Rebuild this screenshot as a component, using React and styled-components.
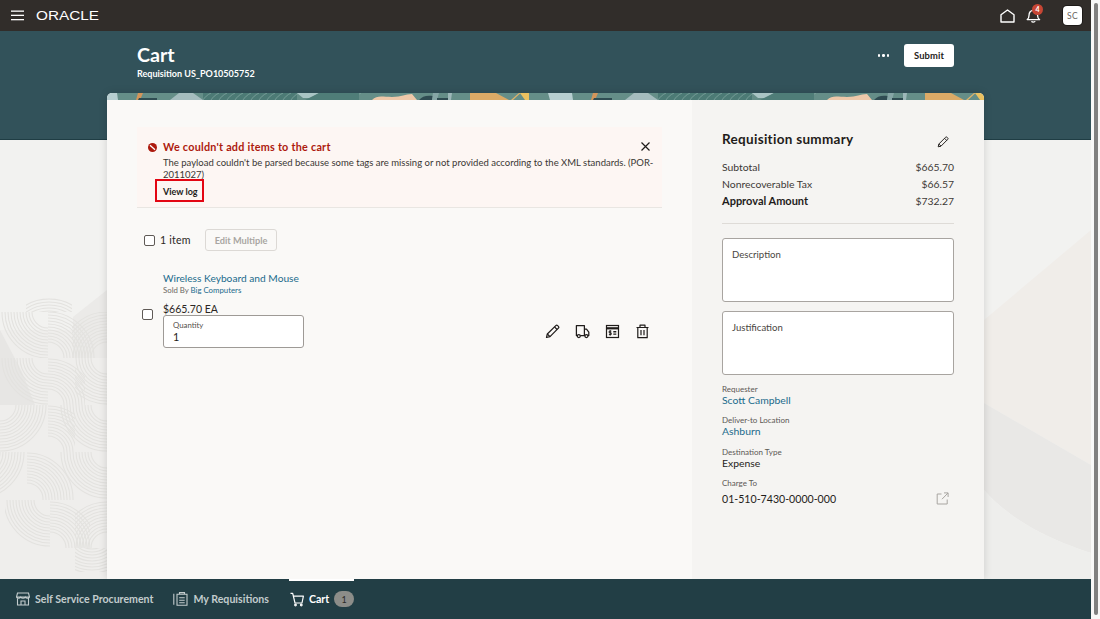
import React from "react";
import styled, { createGlobalStyle } from "styled-components";

const FONT = `Lato, "Noto Sans", sans-serif`;
const LINK = "#1b6b8c";

const Global = createGlobalStyle`
  html, body { margin: 0; padding: 0; height: 100%; overflow: hidden; background: #f2f2f0; }
  body { font-family: ${FONT}; color: #1f1c1a; }
  #root { width: 1100px; height: 619px; }
`;

const Shell = styled.div`
  width: 1100px; height: 619px; display: flex; overflow: hidden; font-family: ${FONT};
`;
const Viewport = styled.div`
  width: 1091px; height: 619px; display: flex; flex-direction: column; position: relative; flex: none;
`;
const Scrollbar = styled.div`
  width: 9px; flex: none; background: #f8f8f8; display: flex; justify-content: center; padding-top: 3px; box-sizing: border-box;
  &::before { content: ""; width: 4px; height: 612px; border-radius: 2px; background: #808080; margin-left: 1px; }
`;
const TopBar = styled.header`
  height: 31px; flex: none; background: #312d2a; display: flex; align-items: center; padding: 0 9px 0 11px; position: relative; z-index: 2;
`;
const Spacer = styled.div` flex: 1; `;
const Logo = styled.svg` margin-left: 12px; display: block; `;
const NavIcon = styled.svg` display: block; flex: none; `;
const BellWrap = styled.div` position: relative; width: 15px; height: 17px; margin-left: 11px; margin-right: 22px; `;
const BellBadge = styled.span`
  position: absolute; top: -3px; left: 6px; width: 11px; height: 11px; border-radius: 50%; background: #c74634; color: #fff;
  font-size: 7px; font-weight: 700; line-height: 11px; text-align: center;
`;
const Avatar = styled.div`
  width: 19px; height: 19px; border-radius: 4px; background: #fff; color: #6a6561; font-size: 8.500px; font-weight: 400; letter-spacing: .3px;
  display: flex; align-items: center; justify-content: center; box-shadow: 0 0 0 1px #1d1a18;
`;
const Main = styled.main`
  flex: 1; min-height: 0; display: flex; flex-direction: column; position: relative; overflow: hidden;
  background: linear-gradient(#32525a 0 108px, #1f3d44 108px 109px, transparent 109px);
`;
const Backdrop = styled.svg` position: absolute; left: 0; top: 109px; z-index: 0; `;
const PageHead = styled.div`
  position: relative; z-index: 1; height: 62px; flex: none; display: flex; justify-content: space-between; align-items: flex-start;
  padding: 0 137px; color: #fff;
`;
const Titles = styled.div` padding-top: 13px; `;
const PageTitle = styled.h1` margin: 0; font-size: 19.700px; line-height: 22px; font-weight: 700; `;
const PageSub = styled.div` font-size: 9px; line-height: 14px; font-weight: 700; margin-top: 1px; white-space: nowrap; `;
const HeadActions = styled.div` display: flex; align-items: center; gap: 15px; padding-top: 13px; `;
const Dots = styled.span` display: flex; gap: 2px; & i { width: 2.400px; height: 2.400px; background: #fff; border-radius: 50%; display: block; } `;
const SubmitBtn = styled.button`
  width: 50px; height: 23px; background: #fff; border: 0; border-radius: 3px; font: 700 9.400px ${FONT}; color: #1f1c1a; padding: 0; letter-spacing: .1px;
`;
const CardShadow = styled.div`
  position: relative; z-index: 1; flex: none; box-shadow: 0 0 9px rgba(0,0,0,.14);
  margin: 0 107px; height: 486px; border-radius: 5px 5px 0 0;
`;
const Card = styled.section`
  height: 486px; display: flex; flex-direction: column; overflow: hidden;
  border-radius: 5px 5px 0 0; background: #faf9f7;
`;
const Strip = styled.svg` display: block; flex: none; `;
const CardBody = styled.div` flex: 1; display: flex; min-height: 0; `;
const LeftCol = styled.div` width: 585px; flex: none; box-sizing: border-box; padding: 27px 30px 0; background: #faf9f7; `;
const RightCol = styled.aside` flex: 1; background: #f5f4f2; padding: 28px 30px 0; box-sizing: border-box; `;

const Banner = styled.div`
  height: 81px; box-sizing: border-box; background: #fdf6f3; border-bottom: 1px solid #e9e6e2; position: relative;
  padding: 13px 0 0 26px; display: flex; flex-direction: column; align-items: flex-start;
`;
const ErrIcon = styled.svg` position: absolute; left: 11px; top: 16px; `;
const CloseBtn = styled.svg` position: absolute; right: 11px; top: 14px; `;
const BannerTitle = styled.div` color: #ad1a0e; font-size: 10.800px; font-weight: 700; line-height: 14px; letter-spacing: .25px; `;
const BannerText = styled.div` font-size: 9.500px; line-height: 12px; color: #3a3633; margin-top: 3px; width: 496px; `;
const ViewLog = styled.div`
  margin: -2px 0 0 -8px; width: 49px; height: 23px; box-sizing: border-box; border: 2px solid #e30613; display: flex; align-items: center; padding: 1px 0 0 6px;
  font-size: 9px; font-weight: 700; color: #1f1c1a;
`;
const ItemsBar = styled.div` display: flex; align-items: center; height: 22px; margin: 21px 0 0 7px; `;
const Check = styled.span`
  width: 9px; height: 9px; border: 1.200px solid #5f5a56; border-radius: 2px; background: #fff; display: block; flex: none;
`;
const ItemCount = styled.span` font-size: 10.600px; margin-left: 5px; color: #2b2724; width: 45px; letter-spacing: .2px; `;
const GhostBtn = styled.span`
  width: 72px; height: 22px; box-sizing: border-box; border: 1px solid #dcd9d5; border-radius: 3px; font-size: 9.200px; font-weight: 700; color: #a9a6a2;
  display: flex; align-items: center; justify-content: center;
`;
const Item = styled.div` margin-top: 20px; padding-left: 26px; position: relative; `;
const ItemCheck = styled(Check)` position: absolute; left: 5px; top: 38px; `;
const ItemLink = styled.a` display: block; color: ${LINK}; font-size: 10.200px; line-height: 14px; `;
const Sold = styled.div` font-size: 7.800px; line-height: 10px; color: #6b6763; & a { color: ${LINK}; } `;
const Price = styled.div` font-size: 10.500px; line-height: 14px; margin-top: 7px; color: #2b2724; `;
const Row = styled.div` display: flex; align-items: center; margin-top: -1px; `;
const QtyBox = styled.div`
  width: 141px; height: 33px; box-sizing: border-box; background: #fff; border: 1px solid #9e9a96; border-radius: 3px; padding: 4px 9px;
  flex: none;
`;
const QtyLabel = styled.div` font-size: 7.800px; line-height: 10px; color: #55504c; `;
const QtyValue = styled.div` font-size: 10.800px; line-height: 13px; color: #1f1c1a; `;
const Actions = styled.div` display: flex; gap: 15px; margin-left: 241px; `;

const SumHead = styled.div` display: flex; justify-content: space-between; align-items: center; height: 20px; padding-right: 5px; `;
const SumTitle = styled.h2` margin: 0; padding-top: 2px; font-size: 13.500px; font-weight: 700; letter-spacing: .3px; color: #1f1c1a; `;
const SumEdit = styled.span` display: block; margin-top: 8px; `;
const SumRows = styled.div` margin-top: 10px; padding-bottom: 14px; border-bottom: 1px solid #dedbd7; `;
const SumRow = styled.div`
  display: flex; justify-content: space-between; height: 17px; align-items: center; font-size: 10.400px; color: #3d3936;
`;
const SumStrong = styled.span` font-weight: 700; font-size: 11px; color: #1f1c1a; `;
const Field = styled.div`
  height: 64px; box-sizing: border-box; border: 1px solid #a8a4a0; border-radius: 3px; background: #fff; padding: 10px 9px; font-size: 9.600px; color: #4a4642;
  margin-top: ${p => p.$mt}px;
`;
const Info = styled.div` margin-top: ${p => p.$mt || 0}px; `;
const InfoLabel = styled.div` font-size: 8px; line-height: 10px; color: #5c5854; `;
const InfoLink = styled.a` display: block; font-size: 10.400px; line-height: 12px; color: ${LINK}; `;
const InfoText = styled.div` font-size: 10.400px; line-height: 13px; color: #1f1c1a; `;
const ChargeRow = styled.div` display: flex; justify-content: space-between; align-items: center; margin-top: 4px; padding-right: 5px; font-size: 10.600px; color: #1f1c1a; `;

const BottomBar = styled.nav`
  height: 40px; flex: none; background: #223e45; display: flex; align-items: center; padding-left: 16px; position: relative; z-index: 2;
`;
const Tab = styled.div`
  display: flex; align-items: center; gap: 5px; height: 40px; font-size: 10.600px; font-weight: 700; margin-right: ${p => p.$mr}px;
  color: ${p => (p.$active ? "#fff" : "#c3cccd")}; position: relative;
  ${p => p.$active && `&::before { content: ""; position: absolute; left: -1px; right: 0; top: 0; height: 2px; background: #fff; }`}
`;
const CountPill = styled.span`
  width: 20px; height: 16px; border-radius: 8px; background: #8c8d89; color: #2a2a28; font-size: 9px; font-weight: 400;
  display: flex; align-items: center; justify-content: center;
`;

/* ---------- drawings ---------- */
const Hamburger = () => (
  <NavIcon width="13" height="11" viewBox="0 0 13 11" fill="#fff">
    <rect y="0.500" width="13" height="1.300" /><rect y="4.700" width="13" height="1.300" /><rect y="9" width="13" height="1.300" />
  </NavIcon>
);
const OracleLogo = () => (
  <Logo width="64" height="12" viewBox="0 0 64 12">
    <text x="0" y="10.400" textLength="63" lengthAdjust="spacingAndGlyphs" fontFamily="Liberation Sans, Arial, sans-serif" fontSize="12" fill="#fff">ORACLE</text>
  </Logo>
);
const Home = () => (
  <NavIcon width="15" height="14" viewBox="0 0 15 14" fill="none" stroke="#fff" strokeWidth="1.400">
    <path d="M1 5.800 7.500 1 14 5.800V13H1Z" strokeLinejoin="round" />
  </NavIcon>
);
const Bell = () => (
  <NavIcon width="15" height="17" viewBox="0 0 15 17" fill="none" stroke="#fff" strokeWidth="1.300">
    <path d="M1.200 12.600c1.300-1 1.800-2.200 1.800-4.200C3 5.400 4.600 3.300 7.300 3.300s4.300 2.100 4.300 5.100c0 2 .6 3.200 2 4.200Z" strokeLinejoin="round" />
    <path d="M5.500 14.300c.5 1.100 3.100 1.100 3.700 0" />
  </NavIcon>
);
const Pencil = ({ size = 15 }) => (
  <NavIcon width={size} height={size} viewBox="0 0 15 15" fill="none" stroke="#1f1c1a" strokeWidth="1.200" strokeLinejoin="round">
    <path d="M1.500 13.500 2.300 10 10.800 1.600a1.300 1.300 0 0 1 1.800 0l.8.8a1.300 1.300 0 0 1 0 1.800L5 12.700Z" />
    <path d="M9.500 2.900 12.100 5.500M2.300 10 5 12.700" />
  </NavIcon>
);
const Truck = () => (
  <NavIcon width="15" height="15" viewBox="0 0 15 15" fill="none" stroke="#1f1c1a" strokeWidth="1.250" strokeLinejoin="round">
    <path d="M2.300 11.500H1.400V1.600h8v9.900H5.300M9.400 5.200h2.100l2.300 2.900v3.400h-.9M9.400 11.500h.6" />
    <circle cx="3.800" cy="12" r="1.500" /><circle cx="11.400" cy="12" r="1.500" />
  </NavIcon>
);
const Budget = () => (
  <NavIcon width="15" height="15" viewBox="0 0 15 15" fill="none" stroke="#1f1c1a" strokeWidth="1.200">
    <rect x="1.500" y="1.500" width="12" height="12" />
    <path d="M1.500 4.300h12" strokeWidth="2.200" />
    <path d="M6.400 7.100H4.200v1.700h2v1.800H3.900M5.200 6.200v5.400" strokeWidth="1" />
    <path d="M8.300 7.700h3M8.300 10.100h3" strokeWidth="1.400" />
  </NavIcon>
);
const Trash = () => (
  <NavIcon width="15" height="15" viewBox="0 0 15 15" fill="none" stroke="#1f1c1a" strokeWidth="1.200" strokeLinejoin="round">
    <path d="M1.500 3.500h12M5 3.500V1.200h5v2.300M2.800 3.500v10.200h9.400V3.500M6 6v5.300M9 6v5.300" />
  </NavIcon>
);
const ExtLink = () => (
  <NavIcon width="13" height="13" viewBox="0 0 13 13" fill="none" stroke="#a8a5a1" strokeWidth="1">
    <path d="M5.500 2H1.200v10h10V7.500M6 7.200 12 1M8 .9h4.100V5" />
  </NavIcon>
);
const ErrorGlyph = () => (
  <ErrIcon width="9" height="9" viewBox="0 0 9 9">
    <circle cx="4.500" cy="4.500" r="4.500" fill="#ad1a0e" />
    <path d="M2 2.200 7 6.800" stroke="#fff" strokeWidth="1.300" />
  </ErrIcon>
);
const Close = () => (
  <CloseBtn width="11" height="11" viewBox="0 0 11 11" stroke="#1f1c1a" strokeWidth="1.200">
    <path d="M1.500 1.500 9.500 9.500M9.500 1.500 1.500 9.500" />
  </CloseBtn>
);
const Store = () => (
  <NavIcon width="14" height="14" viewBox="0 0 14 14" fill="none" stroke="#c3cccd" strokeWidth="1.100">
    <path d="M1.500 1h11l1 4H.5ZM1.500 5v8h11V5M5 13V9h4v4M.5 5c.6 1.700 3.400 1.700 4.300 0 .8 1.700 3.600 1.700 4.400 0 .8 1.700 3.700 1.700 4.300 0" />
  </NavIcon>
);
const Clipboard = () => (
  <NavIcon width="15" height="14" viewBox="0 0 15 14" fill="none" stroke="#c3cccd" strokeWidth="1.100">
    <path d="M.8 2v11M4 2.500h10V13.500H4ZM6.500 2.500V.8h5v1.700M6.200 6h5.500M6.200 8.500h5.500M6.200 11h5.500" transform="translate(0 -.2)" />
  </NavIcon>
);
const CartGlyph = () => (
  <NavIcon width="14" height="15" viewBox="0 0 14 15" fill="none" stroke="#fff" strokeWidth="1.200" strokeLinejoin="round">
    <path d="M.5 1.300H2.700L5 11h7l1.400-6.800H3.500" />
    <circle cx="5.500" cy="13" r=".8" /><circle cx="11.300" cy="13" r=".8" />
  </NavIcon>
);

const STRIP_W = 877;
const TILE = 455;
const LINES = [96, 104, 112, 120, 128, 136, 144, 152, 160, 168, 176, 184, 214, 222, 230, 238, 246];
const TileShapes = () => (
  <>
    <rect width="455" height="7" fill="#658e88" />
    <path d="M0 0h10l1 7H0Z" fill="#b7ced0" />
    <path d="M31 0h5l-3 7h-4Z" fill="#d3955a" />
    <path d="M32 5h18v2H31Z" fill="#2f4c52" />
    <path d="M63 7 72 0h14l10 7Z" fill="#a5bcbe" />
    <path d="M96 0h94v7H96Z" fill="#4c7a75" />
    {LINES.map(x => <path key={x} d={`M${x} 7c2-3 4-5 8-7`} stroke="#7ea39d" strokeWidth=".8" fill="none" />)}
    <path d="M190 0h22l-8 5h-8Z" fill="#a9c4c4" />
    <path d="M212 0h40v7h-54Z" fill="#4f7d78" />
    <path d="M265 7c5-5 10-3 20-3s13-3 20-3l5 6Z" fill="#eec8a9" />
    <path d="M312 7c3-4 8-5 14-4l-1 4Z" fill="#2f4c52" />
    <path d="M326 0h6l-2 7h-5Z" fill="#86a6a6" />
    <path d="M330 5h11v2h-11Z" fill="#2f4c52" />
    <path d="M341 0h4l-1 7h-3Z" fill="#9db8b9" />
    <path d="M363 0h26l13 7h-39Z" fill="#dcaa66" />
    <path d="M404 7 412 0h1.500l-7.500 7Z" fill="#e3b468" />
    <path d="M413 0h9v7h-4Z" fill="#eac160" />
    <path d="M441 0h14v7h-12Z" fill="#b7ced0" />
  </>
);
const TopStrip = () => (
  <Strip width={STRIP_W} height="7" viewBox={`0 0 ${STRIP_W} 7`}>
    <defs>
      <pattern id="leafTile" width={TILE} height="7" patternUnits="userSpaceOnUse"><TileShapes /></pattern>
    </defs>
    <rect width={STRIP_W} height="7" fill="url(#leafTile)" />
  </Strip>
);

/* concentric arc tiles in page coordinates: [clip x, clip y, clip w, clip h, centre x, centre y] */
const ARC_TILES = [
  [26, 298, 46, 14, 49, 345],
  [0, 312, 48, 46, 48, 312],
  [48, 312, 48, 46, 48, 358],
  [72, 312, 35, 46, 107, 358],
  [0, 358, 48, 47, 48, 358],
  [48, 358, 37, 47, 48, 405],
  [75, 358, 32, 47, 107, 358],
  [0, 405, 48, 47, 0, 405],
  [48, 405, 27, 47, 48, 452],
  [52, 405, 55, 47, 107, 405],
  [0, 452, 25, 48, -22, 452],
  [27, 452, 47, 48, 27, 499],
  [52, 452, 55, 48, 107, 452],
  [5, 500, 45, 48, 50, 500],
  [50, 500, 40, 48, 50, 548],
  [75, 500, 32, 48, 107, 548],
  [75, 548, 32, 24, 92, 530],
];
const RINGS = [46, 43, 40, 37, 34, 31, 28, 25, 22, 19, 16];
const BackgroundArt = () => (
  <Backdrop width="1091" height="439" viewBox="0 140 1091 439" fill="none">
    <path d="M0 140h1091v439H0Z" fill="#f2f2f0" />
    <path d="M0 330h107v249H0Z" fill="#efeeec" />
    <path d="M73 317 107 290v68H73Z" fill="#ebeae8" />
    <path d="M0 330 22 372 35 405H0Z" fill="#e7e6e4" />
    <path d="M984 320 1091 230V465L984 403Z" fill="#f0ede9" />
    <path d="M984 403 1091 465V553C1050 540 1010 520 984 490Z" fill="#e9e8e6" />
    <path d="M984 490C1010 520 1050 540 1091 553V579H984Z" fill="#eeeeec" />
    <defs>
      {ARC_TILES.map(([x, y, w, h], i) => (
        <clipPath id={`arcClip${i}`} key={i}><rect x={x} y={y} width={w} height={h} /></clipPath>
      ))}
    </defs>
    {ARC_TILES.map(([x, y, w, h, cx, cy], i) => (
      <g key={i} clipPath={`url(#arcClip${i})`} stroke="#e3e2df" strokeWidth="1.100">
        {RINGS.map(r => <circle key={r} cx={cx} cy={cy} r={r} />)}
      </g>
    ))}
  </Backdrop>
);

export default function App() {
  return (
    <Shell>
      <Global />
      <Viewport>
        <TopBar>
          <Hamburger />
          <OracleLogo />
          <Spacer />
          <Home />
          <BellWrap><Bell /><BellBadge>4</BellBadge></BellWrap>
          <Avatar>SC</Avatar>
        </TopBar>
        <Main>
          <BackgroundArt />
          <PageHead>
            <Titles>
              <PageTitle>Cart</PageTitle>
              <PageSub>Requisition US_PO10505752</PageSub>
            </Titles>
            <HeadActions>
              <Dots><i /><i /><i /></Dots>
              <SubmitBtn>Submit</SubmitBtn>
            </HeadActions>
          </PageHead>
          <CardShadow>
            <Card>
              <TopStrip />
              <CardBody>
                <LeftCol>
                  <Banner>
                    <ErrorGlyph />
                    <Close />
                    <BannerTitle>We couldn't add items to the cart</BannerTitle>
                    <BannerText>The payload couldn't be parsed because some tags are missing or not provided according to the XML standards. (POR-2011027)</BannerText>
                    <ViewLog>View log</ViewLog>
                  </Banner>
                  <ItemsBar>
                    <Check />
                    <ItemCount>1 item</ItemCount>
                    <GhostBtn>Edit Multiple</GhostBtn>
                  </ItemsBar>
                  <Item>
                    <ItemCheck />
                    <ItemLink>Wireless Keyboard and Mouse</ItemLink>
                    <Sold>Sold By <a>Big Computers</a></Sold>
                    <Price>$665.70 EA</Price>
                    <Row>
                      <QtyBox>
                        <QtyLabel>Quantity</QtyLabel>
                        <QtyValue>1</QtyValue>
                      </QtyBox>
                      <Actions><Pencil /><Truck /><Budget /><Trash /></Actions>
                    </Row>
                  </Item>
                </LeftCol>
                <RightCol>
                  <SumHead>
                    <SumTitle>Requisition summary</SumTitle>
                    <SumEdit><Pencil size={12} /></SumEdit>
                  </SumHead>
                  <SumRows>
                    <SumRow><span>Subtotal</span><span>$665.70</span></SumRow>
                    <SumRow><span>Nonrecoverable Tax</span><span>$66.57</span></SumRow>
                    <SumRow><SumStrong>Approval Amount</SumStrong><span>$732.27</span></SumRow>
                  </SumRows>
                  <Field $mt={14}>Description</Field>
                  <Field $mt={9}>Justification</Field>
                  <Info $mt={9}>
                    <InfoLabel>Requester</InfoLabel>
                    <InfoLink>Scott Campbell</InfoLink>
                  </Info>
                  <Info $mt={9}>
                    <InfoLabel>Deliver-to Location</InfoLabel>
                    <InfoLink>Ashburn</InfoLink>
                  </Info>
                  <Info $mt={10}>
                    <InfoLabel>Destination Type</InfoLabel>
                    <InfoText>Expense</InfoText>
                  </Info>
                  <Info $mt={8}>
                    <InfoLabel>Charge To</InfoLabel>
                    <ChargeRow><span>01-510-7430-0000-000</span><ExtLink /></ChargeRow>
                  </Info>
                </RightCol>
              </CardBody>
            </Card>
          </CardShadow>
        </Main>
        <BottomBar>
          <Tab $mr={20}><Store />Self Service Procurement</Tab>
          <Tab $mr={21}><Clipboard />My Requisitions</Tab>
          <Tab $active><CartGlyph />Cart<CountPill>1</CountPill></Tab>
        </BottomBar>
      </Viewport>
      <Scrollbar />
    </Shell>
  );
}
